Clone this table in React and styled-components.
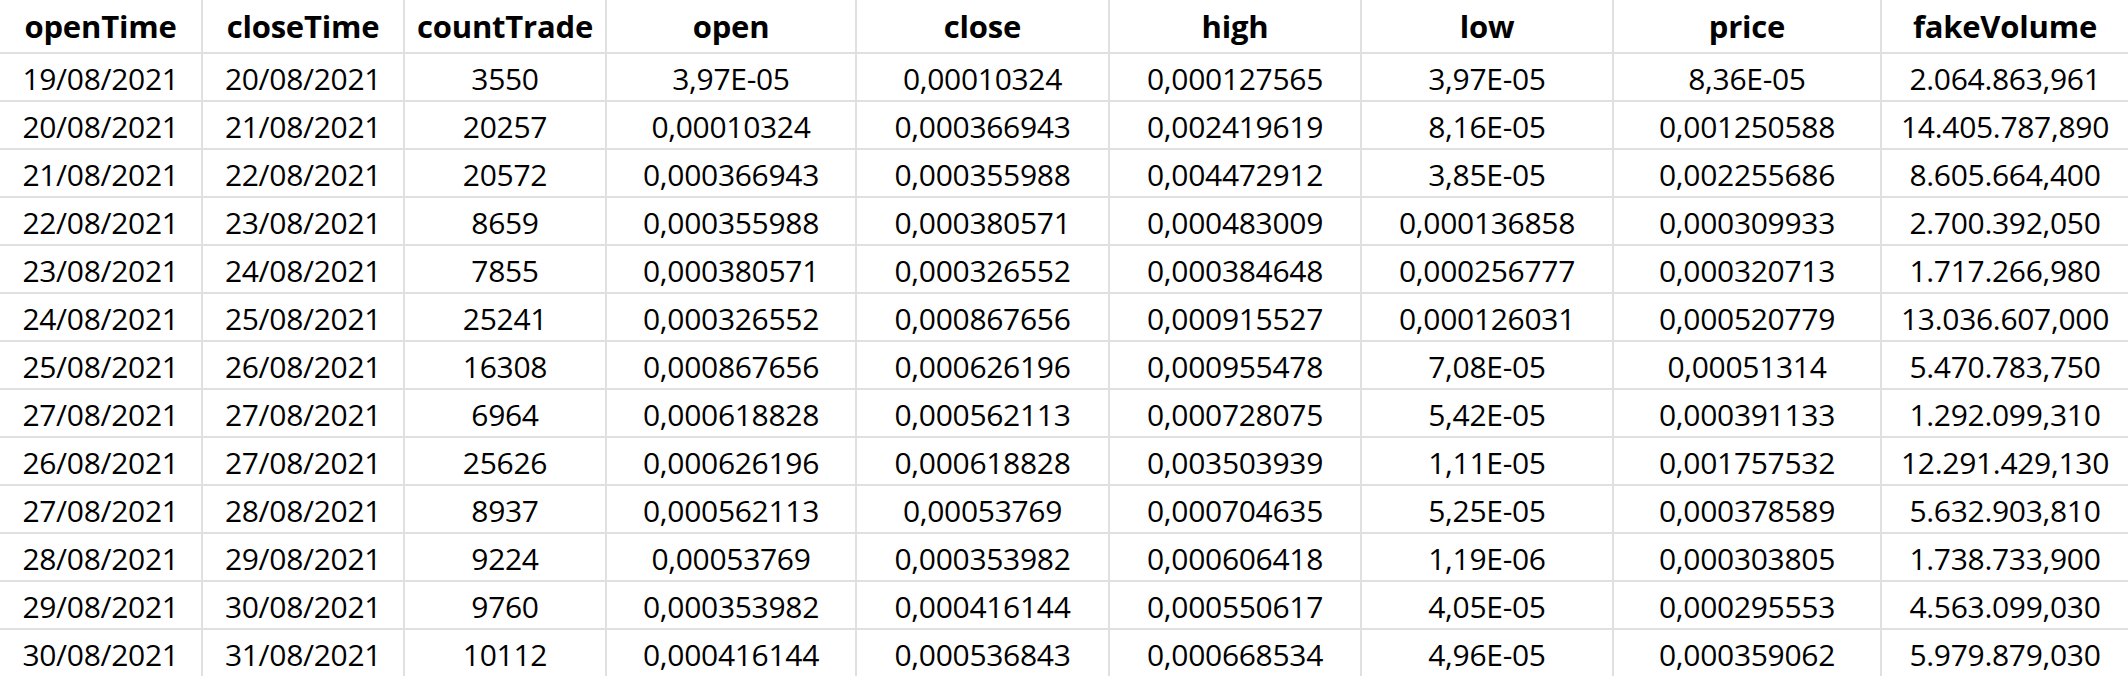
import React from "react";
import styled, { createGlobalStyle } from "styled-components";

const GlobalStyle = createGlobalStyle`
  html, body { margin: 0; padding: 0; background: #ffffff; }
  body { font-family: "Open Sans", "Liberation Sans", sans-serif; color: #000; }
`;

const columns = [
  { key: "openTime", width: 203 },
  { key: "closeTime", width: 202 },
  { key: "countTrade", width: 202 },
  { key: "open", width: 250 },
  { key: "close", width: 253 },
  { key: "high", width: 252 },
  { key: "low", width: 252 },
  { key: "price", width: 268 },
  { key: "fakeVolume", width: 246 },
];

const rows = [
  ["19/08/2021", "20/08/2021", "3550", "3,97E-05", "0,00010324", "0,000127565", "3,97E-05", "8,36E-05", "2.064.863,961"],
  ["20/08/2021", "21/08/2021", "20257", "0,00010324", "0,000366943", "0,002419619", "8,16E-05", "0,001250588", "14.405.787,890"],
  ["21/08/2021", "22/08/2021", "20572", "0,000366943", "0,000355988", "0,004472912", "3,85E-05", "0,002255686", "8.605.664,400"],
  ["22/08/2021", "23/08/2021", "8659", "0,000355988", "0,000380571", "0,000483009", "0,000136858", "0,000309933", "2.700.392,050"],
  ["23/08/2021", "24/08/2021", "7855", "0,000380571", "0,000326552", "0,000384648", "0,000256777", "0,000320713", "1.717.266,980"],
  ["24/08/2021", "25/08/2021", "25241", "0,000326552", "0,000867656", "0,000915527", "0,000126031", "0,000520779", "13.036.607,000"],
  ["25/08/2021", "26/08/2021", "16308", "0,000867656", "0,000626196", "0,000955478", "7,08E-05", "0,00051314", "5.470.783,750"],
  ["27/08/2021", "27/08/2021", "6964", "0,000618828", "0,000562113", "0,000728075", "5,42E-05", "0,000391133", "1.292.099,310"],
  ["26/08/2021", "27/08/2021", "25626", "0,000626196", "0,000618828", "0,003503939", "1,11E-05", "0,001757532", "12.291.429,130"],
  ["27/08/2021", "28/08/2021", "8937", "0,000562113", "0,00053769", "0,000704635", "5,25E-05", "0,000378589", "5.632.903,810"],
  ["28/08/2021", "29/08/2021", "9224", "0,00053769", "0,000353982", "0,000606418", "1,19E-06", "0,000303805", "1.738.733,900"],
  ["29/08/2021", "30/08/2021", "9760", "0,000353982", "0,000416144", "0,000550617", "4,05E-05", "0,000295553", "4.563.099,030"],
  ["30/08/2021", "31/08/2021", "10112", "0,000416144", "0,000536843", "0,000668534", "4,96E-05", "0,000359062", "5.979.879,030"],
];

const Sheet = styled.div`
  width: 2128px;
  height: 676px;
  overflow: hidden;
  display: grid;
  grid-template-columns: ${columns.map((c) => `${c.width}px`).join(" ")};
  grid-auto-rows: 48px;
  grid-template-rows: 54px;
`;

const Cell = styled.div`
  box-sizing: border-box;
  display: flex;
  align-items: center;
  justify-content: center;
  border-bottom: 2px solid #e0e0e0;
  border-right: ${(p) => (p.$last ? "none" : "2px solid #e0e0e0")};
  font-family: "Open Sans", "Liberation Sans", sans-serif;
  font-size: ${(p) => (p.$header ? "31px" : "30px")};
  font-weight: ${(p) => (p.$header ? 700 : 400)};
  letter-spacing: ${(p) => (p.$header ? "-0.2px" : "-0.3px")};
  white-space: nowrap;
  overflow: hidden;
  padding-top: ${(p) => (p.$header ? "0" : "2px")};
`;

export default function App() {
  return (
    <>
      <GlobalStyle />
      <Sheet>
        {columns.map((c, i) => (
          <Cell key={c.key} $header $last={i === columns.length - 1}>
            {c.key}
          </Cell>
        ))}
        {rows.map((r, ri) =>
          r.map((v, ci) => (
            <Cell key={`${ri}-${ci}`} $last={ci === columns.length - 1}>
              {v}
            </Cell>
          ))
        )}
      </Sheet>
    </>
  );
}
